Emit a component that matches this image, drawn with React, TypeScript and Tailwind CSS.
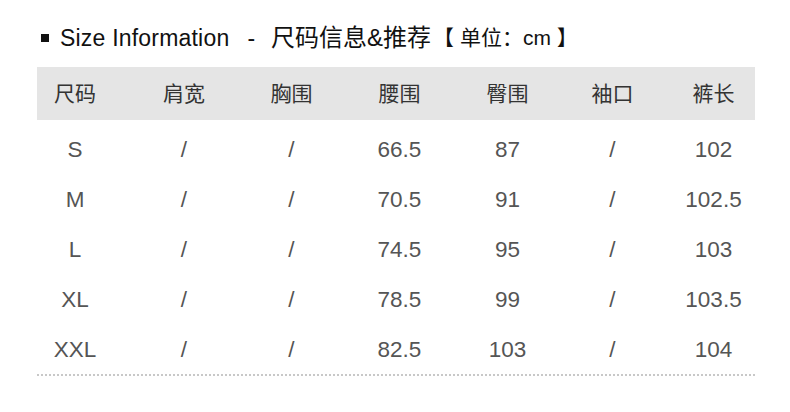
const headers = ["尺码", "肩宽", "胸围", "腰围", "臀围", "袖口", "裤长"];

const rows = [
  ["S", "/", "/", "66.5", "87", "/", "102"],
  ["M", "/", "/", "70.5", "91", "/", "102.5"],
  ["L", "/", "/", "74.5", "95", "/", "103"],
  ["XL", "/", "/", "78.5", "99", "/", "103.5"],
  ["XXL", "/", "/", "82.5", "103", "/", "104"],
];

const cols = "grid grid-cols-[93px_108px_107px_109px_107px_103px_91px] items-center";
const cellPad = ["pr-[17px]", "", "", "", "", "", "pl-[8px]"];

const App = () => {
  return (
    <div
      className="w-[790px] h-[412px] bg-white overflow-hidden"
      style={{ fontFamily: '"Liberation Sans", "Noto Sans CJK SC", sans-serif' }}
    >
      <div className="flex items-center h-[30px] mt-[23px] pl-[41px] text-[#111]">
        <span className="w-[8px] h-[8px] bg-[#111] mr-[11px]" />
        <span className="text-[23px] tracking-[0.2px]">Size Information</span>
        <span className="text-[23px] ml-[18px] mr-[16px]">-</span>
        <span className="text-[24px]">尺码信息&amp;推荐</span>
        <span className="text-[21px] ml-[2px]">【 单位：cm 】</span>
      </div>

      <div className="ml-[37px] w-[718px] mt-[14px]">
        <div className={`${cols} h-[53px] bg-[#e5e5e5] text-[21px] text-[#333]`}>
          {headers.map((h, i) => (
            <div key={h} className={`text-center ${cellPad[i]}`}>
              {h}
            </div>
          ))}
        </div>

        <div className="mt-[5px]">
          {rows.map((row) => (
            <div key={row[0]} className={`${cols} h-[50px] text-[22.5px] text-[#555]`}>
              {row.map((v, i) => (
                <div key={i} className={`text-center ${cellPad[i]}`}>
                  {v}
                </div>
              ))}
            </div>
          ))}
        </div>
        <div className="-mt-[1px] h-[2px] bg-[repeating-linear-gradient(to_right,#c8c8c8_0_2px,transparent_2px_4px)]" />
      </div>
    </div>
  );
};

export default App;
